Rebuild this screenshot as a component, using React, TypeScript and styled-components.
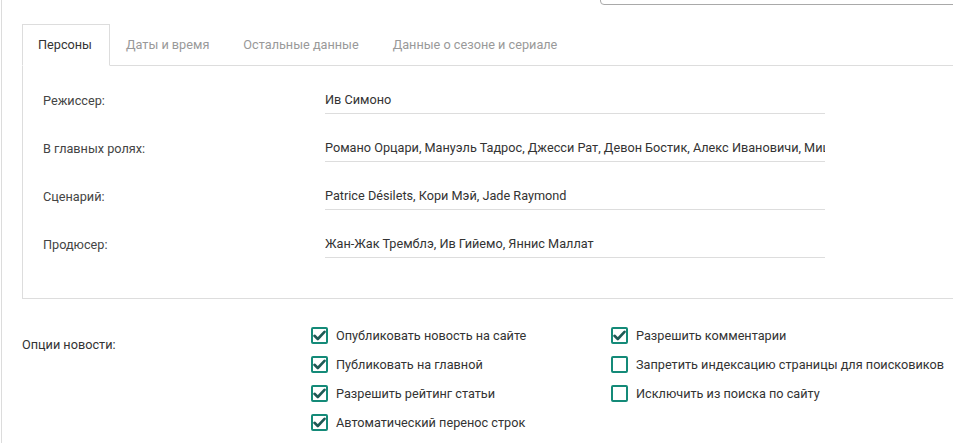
import { styled, createGlobalStyle } from "styled-components";

const GlobalStyle = createGlobalStyle`
  html, body {
    margin: 0;
    padding: 0;
    background: #fff;
    overflow: hidden;
  }
  body {
    font-family: Roboto, "Open Sans", sans-serif;
    font-size: 12.7px;
    color: #333;
  }
`;

const Page = styled.div`
  width: 1000px;
  min-height: 443px;
  margin-left: 1px;
  border-left: 1px solid #dcdcdc;
`;

const TopBar = styled.div`
  display: flex;
  height: 4px;
  padding-left: 598px;
`;

const SearchBox = styled.div`
  flex: 1;
  height: 40px;
  margin-top: -37px;
  border: 1px solid #a9a9a9;
  border-radius: 4px;
`;

const Content = styled.div`
  padding: 20px 0 0 20px;
`;

const TabList = styled.div`
  display: flex;
  border-bottom: 1px solid #dddddd;
`;

const Tab = styled.div<{ $active?: boolean }>`
  box-sizing: border-box;
  height: 42px;
  line-height: 40px;
  padding: 0 17px 0 15px;
  margin-bottom: -1px;
  border: 1px solid ${(p) => (p.$active ? "#dddddd" : "transparent")};
  border-bottom-color: ${(p) => (p.$active ? "#fff" : "transparent")};
  background: ${(p) => (p.$active ? "#fff" : "transparent")};
  color: ${(p) => (p.$active ? "#333" : "#999")};
  white-space: nowrap;
`;

const TabPanel = styled.div`
  border: 1px solid #dddddd;
  border-top: none;
  padding: 20px 20px 40px 20px;
  display: flex;
  flex-direction: column;
  gap: 20px;
`;

const Row = styled.div`
  display: grid;
  grid-template-columns: 282px 500px;
  align-items: center;
`;

const RowLabel = styled.div`
  color: #444;
`;

const Field = styled.input`
  height: 28px;
  box-sizing: border-box;
  padding: 0;
  border: none;
  border-bottom: 1px solid #dddddd;
  font: inherit;
  color: #333;
  background: transparent;
  outline: none;
`;

const Options = styled.div`
  display: grid;
  grid-template-columns: 289px 300px auto;
  margin-top: 22px;
  padding-left: 20px;
`;

const OptionsLabel = styled.div`
  padding-top: 14px;
  line-height: 20px;
  color: #333;
`;

const OptionColumn = styled.div`
  display: flex;
  flex-direction: column;
`;

const Option = styled.label`
  display: flex;
  align-items: center;
  gap: 8px;
  height: 29px;
  white-space: nowrap;
  color: #333;
`;

const Box = styled.span`
  width: 17px;
  height: 17px;
  box-sizing: border-box;
  border: 2px solid #148a78;
  border-radius: 2px;
  display: flex;
  align-items: center;
  justify-content: center;
  flex-shrink: 0;
`;

function Checkbox({ checked }: { checked: boolean }) {
  return (
    <Box>
      {checked && (
        <svg width="13" height="13" viewBox="0 0 13 13">
          <path
            d="M1.5 6.8 L4.8 10 L11.5 2.8"
            fill="none"
            stroke="#1e5a55"
            strokeWidth="2.6"
            strokeLinecap="round"
            strokeLinejoin="round"
          />
        </svg>
      )}
    </Box>
  );
}

const persons = [
  { label: "Режиссер:", value: "Ив Симоно" },
  {
    label: "В главных ролях:",
    value:
      "Романо Орцари, Мануэль Тадрос, Джесси Рат, Девон Бостик, Алекс Ивановичи, Мишель Мюллер",
  },
  { label: "Сценарий:", value: "Patrice Désilets, Кори Мэй, Jade Raymond" },
  { label: "Продюсер:", value: "Жан-Жак Тремблэ, Ив Гийемо, Яннис Маллат" },
];

const tabs = ["Персоны", "Даты и время", "Остальные данные", "Данные о сезоне и сериале"];

const leftOptions = [
  { text: "Опубликовать новость на сайте", checked: true },
  { text: "Публиковать на главной", checked: true },
  { text: "Разрешить рейтинг статьи", checked: true },
  { text: "Автоматический перенос строк", checked: true },
];

const rightOptions = [
  { text: "Разрешить комментарии", checked: true },
  { text: "Запретить индексацию страницы для поисковиков", checked: false },
  { text: "Исключить из поиска по сайту", checked: false },
];

export default function App() {
  return (
    <>
      <GlobalStyle />
      <Page>
        <TopBar>
          <SearchBox />
        </TopBar>
        <Content>
          <TabList>
            {tabs.map((t, i) => (
              <Tab key={t} $active={i === 0}>
                {t}
              </Tab>
            ))}
          </TabList>
          <TabPanel>
            {persons.map((p) => (
              <Row key={p.label}>
                <RowLabel>{p.label}</RowLabel>
                <Field defaultValue={p.value} readOnly />
              </Row>
            ))}
          </TabPanel>
        </Content>
        <Options>
          <OptionsLabel>Опции новости:</OptionsLabel>
          <OptionColumn>
            {leftOptions.map((o) => (
              <Option key={o.text}>
                <Checkbox checked={o.checked} />
                {o.text}
              </Option>
            ))}
          </OptionColumn>
          <OptionColumn>
            {rightOptions.map((o) => (
              <Option key={o.text}>
                <Checkbox checked={o.checked} />
                {o.text}
              </Option>
            ))}
          </OptionColumn>
        </Options>
      </Page>
    </>
  );
}
